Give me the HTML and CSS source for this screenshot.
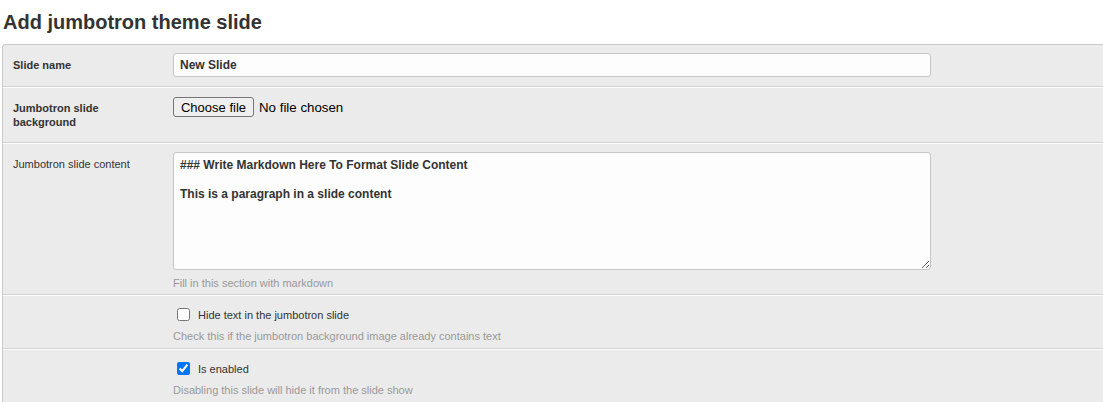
FILE: index.html
```html
<!DOCTYPE html>
<html lang="en">
<head>
<meta charset="utf-8">
<title>Add jumbotron theme slide</title>
<link rel="stylesheet" href="styles.css">
</head>
<body>
<h1 class="page-title">Add jumbotron theme slide</h1>
<form class="module">
  <div class="form-row">
    <label class="field-label required" for="name">Slide name</label>
    <div class="field">
      <input class="text-input" id="name" type="text" value="New Slide">
    </div>
  </div>
  <div class="form-row">
    <label class="field-label required">Jumbotron slide background</label>
    <div class="field">
      <div class="file-control">
        <button type="button" class="file-button">Choose file</button>
        <span class="file-status">No file chosen</span>
      </div>
    </div>
  </div>
  <div class="form-row has-help">
    <label class="field-label" for="content">Jumbotron slide content</label>
    <div class="field">
      <textarea class="text-area" id="content">### Write Markdown Here To Format Slide Content

This is a paragraph in a slide content</textarea>
      <p class="help">Fill in this section with markdown</p>
    </div>
  </div>
  <div class="form-row has-help check-row">
    <div class="field-label"></div>
    <div class="field">
      <label class="check-line"><input type="checkbox" class="check"><span>Hide text in the jumbotron slide</span></label>
      <p class="help">Check this if the jumbotron background image already contains text</p>
    </div>
  </div>
  <div class="form-row has-help check-row">
    <div class="field-label"></div>
    <div class="field">
      <label class="check-line"><input type="checkbox" class="check" checked><span>Is enabled</span></label>
      <p class="help">Disabling this slide will hide it from the slide show</p>
    </div>
  </div>
</form>
</body>
</html>
```

FILE: styles.css
```css
html, body {
  margin: 0;
  padding: 0;
  background: #ffffff;
  overflow: hidden;
}

body {
  font-family: "Liberation Sans", Arial, Helvetica, sans-serif;
  color: #333333;
}

.page-title {
  margin: 0;
  padding: 11px 3px 0;
  height: 35px;
  box-sizing: border-box;
  font-size: 20px;
  line-height: 22px;
  font-weight: bold;
  color: #333333;
}

.module {
  margin: 9px -20px 0 2px;
  border: 1px solid #c9c9c9;
  border-right: none;
  border-top-left-radius: 4px;
  background: #ebebeb;
}

.form-row {
  display: flex;
  align-items: flex-start;
  padding: 8px 10px 9px;
  border-top: 1px solid #ffffff;
  border-bottom: 1px solid #d2d2d2;
}

.form-row:first-child {
  border-top: none;
}

.form-row.has-help {
  padding-bottom: 5px;
}

.form-row.check-row {
  padding-bottom: 6px;
}

.field-label {
  flex: 0 0 130px;
  margin-right: 30px;
  padding: 5px 0 4px;
  font-size: 11px;
  line-height: 14px;
  color: #333333;
}

.field-label.required {
  font-weight: bold;
}

.field {
  flex: 0 0 758px;
}

.text-input {
  display: block;
  box-sizing: border-box;
  width: 758px;
  height: 24px;
  margin: 0;
  padding: 0 6px;
  border: 1px solid #c6c6c6;
  border-radius: 3px;
  background: #fdfdfd;
  font-family: "Liberation Sans", Arial, sans-serif;
  font-size: 12px;
  font-weight: bold;
  color: #333333;
}

.file-control {
  display: flex;
  align-items: center;
  height: 20px;
  margin-top: 1px;
}

.file-button {
  box-sizing: border-box;
  height: 20px;
  width: 81px;
  margin: 0 5px 0 0;
  padding: 0;
  border: 1px solid #767676;
  border-radius: 3px;
  background: #efefef;
  font-family: "Liberation Sans", Arial, sans-serif;
  font-size: 13px;
  color: #000000;
}

.file-status {
  font-size: 13.3px;
  color: #000000;
}

.text-area {
  display: block;
  box-sizing: border-box;
  width: 758px;
  height: 118px;
  margin: 0;
  padding: 5px 6px;
  border: 1px solid #c6c6c6;
  border-radius: 3px;
  background: #fdfdfd;
  font-family: "Liberation Sans", Arial, sans-serif;
  font-size: 12px;
  line-height: 14.5px;
  font-weight: bold;
  color: #333333;
}

.help {
  margin: 7px 0 0;
  font-size: 11px;
  line-height: 12px;
  color: #999999;
}

.check-line {
  display: flex;
  align-items: center;
  height: 21px;
  font-size: 11px;
  color: #333333;
}

.check {
  width: 13px;
  height: 13px;
  margin: 0 8px 0 4px;
}

.check-row .help {
  margin-top: 5px;
}
```
